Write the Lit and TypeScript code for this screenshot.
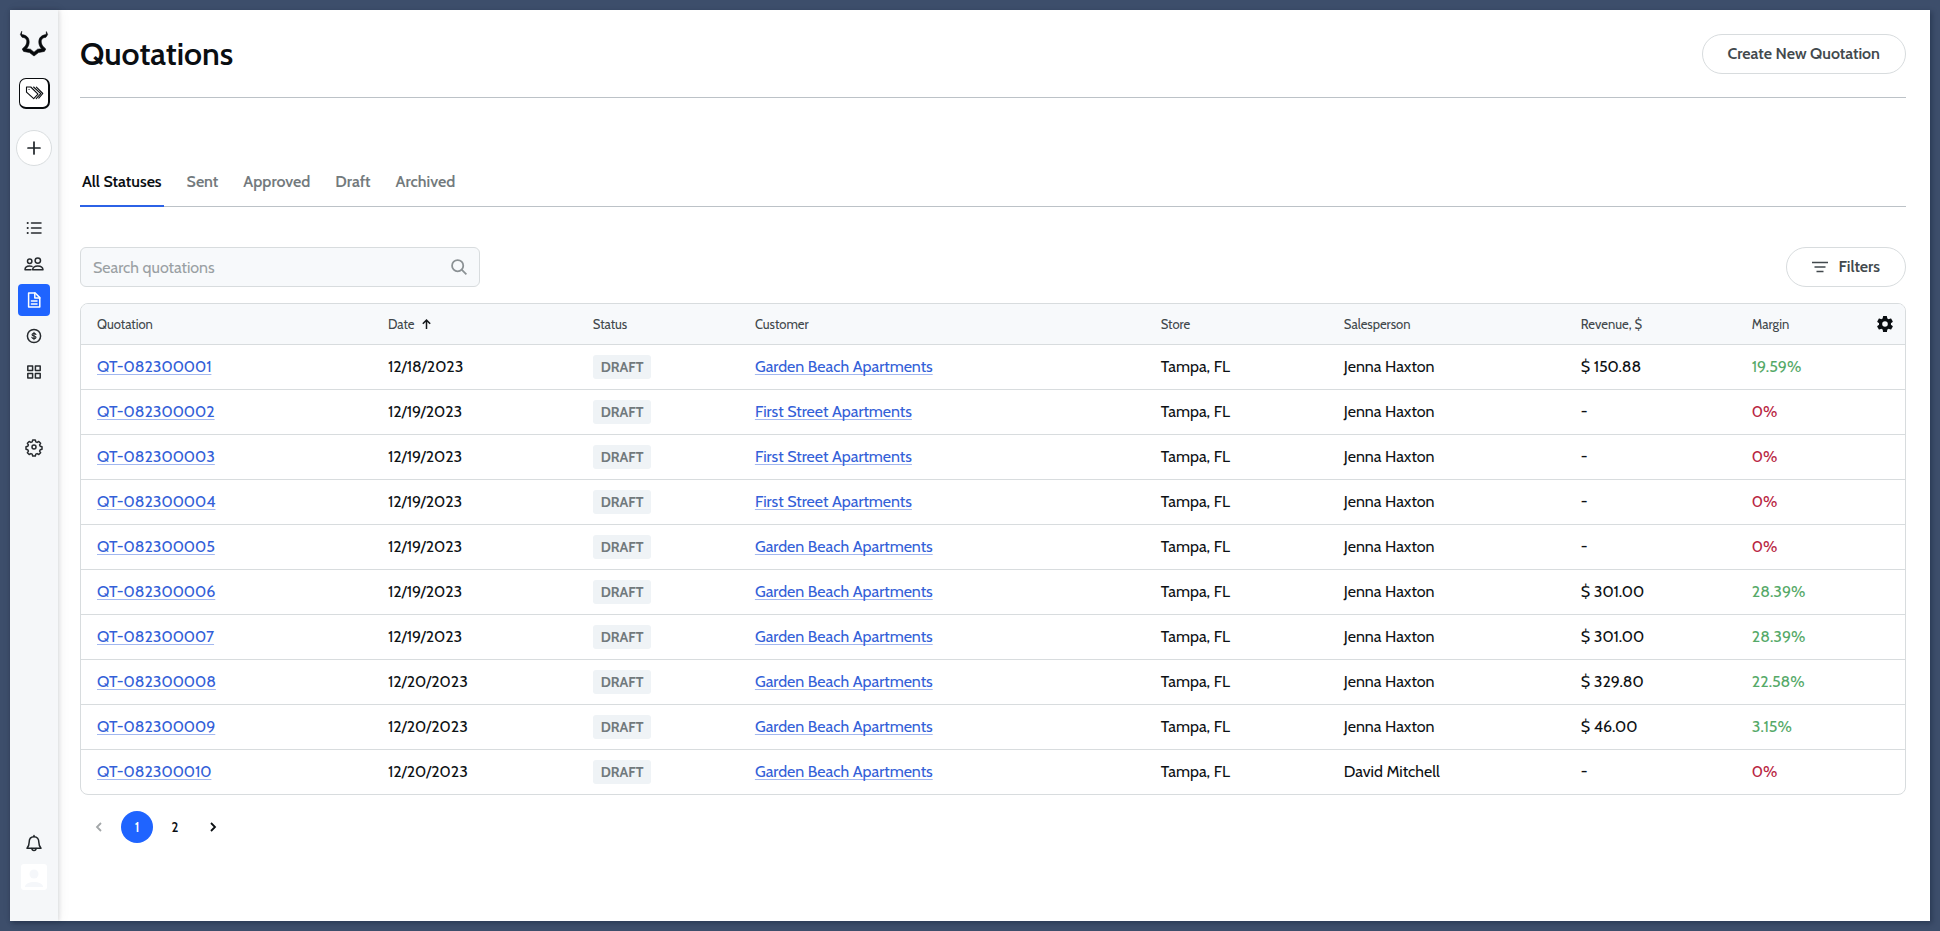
import { LitElement, html, css, svg } from "lit";
import { customElement, property, state } from "lit/decorators.js";
import { classMap } from "lit/directives/class-map.js";

interface Quotation {
  id: string;
  date: string;
  customer: string;
  person: string;
  revenue: string;
  margin: string;
}

const GARDEN = "Garden Beach Apartments";
const FIRST = "First Street Apartments";
const JENNA = "Jenna Haxton";

const QUOTATIONS: Quotation[] = [
  { id: "QT-082300001", date: "12/18/2023", customer: GARDEN, person: JENNA, revenue: "$ 150.88", margin: "19.59%" },
  { id: "QT-082300002", date: "12/19/2023", customer: FIRST, person: JENNA, revenue: "-", margin: "0%" },
  { id: "QT-082300003", date: "12/19/2023", customer: FIRST, person: JENNA, revenue: "-", margin: "0%" },
  { id: "QT-082300004", date: "12/19/2023", customer: FIRST, person: JENNA, revenue: "-", margin: "0%" },
  { id: "QT-082300005", date: "12/19/2023", customer: GARDEN, person: JENNA, revenue: "-", margin: "0%" },
  { id: "QT-082300006", date: "12/19/2023", customer: GARDEN, person: JENNA, revenue: "$ 301.00", margin: "28.39%" },
  { id: "QT-082300007", date: "12/19/2023", customer: GARDEN, person: JENNA, revenue: "$ 301.00", margin: "28.39%" },
  { id: "QT-082300008", date: "12/20/2023", customer: GARDEN, person: JENNA, revenue: "$ 329.80", margin: "22.58%" },
  { id: "QT-082300009", date: "12/20/2023", customer: GARDEN, person: JENNA, revenue: "$ 46.00", margin: "3.15%" },
  { id: "QT-082300010", date: "12/20/2023", customer: GARDEN, person: "David Mitchell", revenue: "-", margin: "0%" },
];

const TABS = ["All Statuses", "Sent", "Approved", "Draft", "Archived"];

const GEAR =
  "M19.4 13a7.5 7.5 0 0 0 0-2l2.1-1.65a.5.5 0 0 0 .12-.64l-2-3.46a.5.5 0 0 0-.61-.22l-2.49 1a7.3 7.3 0 0 0-1.69-.98l-.38-2.65A.49.49 0 0 0 14 2h-4a.49.49 0 0 0-.49.42l-.38 2.65c-.61.25-1.17.59-1.69.98l-2.49-1a.49.49 0 0 0-.61.22l-2 3.46a.5.5 0 0 0 .12.64L4.57 11a7.9 7.9 0 0 0 0 2l-2.11 1.65a.5.5 0 0 0-.12.64l2 3.46c.12.22.39.3.61.22l2.49-1c.52.4 1.08.73 1.69.98l.38 2.65c.03.24.24.4.49.4h4c.25 0 .46-.16.49-.4l.38-2.65a7.7 7.7 0 0 0 1.69-.98l2.49 1c.23.09.49 0 .61-.22l2-3.46a.5.5 0 0 0-.12-.64zM12 15.5a3.5 3.5 0 1 1 0-7 3.5 3.5 0 0 1 0 7z";

const ICONS = {
  list: svg`<path d="M6.500 4H16M6.500 9H16M6.500 14H16"/><path d="M2.600 4h.2M2.600 9h.2M2.600 14h.2" stroke-width="1.900"/>`,
  people: svg`<circle cx="4.700" cy="6.200" r="2.200"/><circle cx="12.800" cy="5.600" r="2.700"/><path d="M6 14.800H0c0-2.300 1.700-3.900 4.500-3.900 1 0 1.800.2 2.500.5"/><path d="M7.600 14.800c.2-2.300 2.300-3.900 5.200-3.900s5 1.600 5.200 3.900z"/>`,
  document: svg`<path d="M3.600 2h6.600l4.600 4.600V16H3.600z"/><path d="M9.800 2v5h5M6.400 10h5.600M6.400 13h5.600"/>`,
  dollar: svg`<circle cx="9" cy="9" r="6.600"/><path d="M10.900 7.500c-.2-.7-.9-1.100-1.900-1.100s-1.900.5-1.900 1.300c0 1.800 3.900.8 3.900 2.600 0 .8-.9 1.300-2 1.300s-1.900-.5-2.100-1.200M9 5.400v7.200" stroke-width="1.200"/>`,
  grid: svg`<path d="M2.800 3h4.800v4.600H2.800zM10.400 3h4.800v4.600h-4.800zM2.800 10.400h4.800V15H2.800zM10.400 10.400h4.800V15h-4.800z"/>`,
  settings: svg`<circle cx="9" cy="9" r="2"/><path d="M7.700 2h2.600l.5 1.900 1.300.5 1.700-.9 1.800 1.800-1 1.600.6 1.400 1.800.4v2.600l-1.800.4-.6 1.400 1 1.600-1.800 1.800-1.700-.9-1.300.5-.5 1.900H7.700l-.5-1.900-1.300-.5-1.700.9-1.800-1.800 1-1.600-.6-1.400L1 11.300V8.700l1.800-.4.6-1.400-1-1.600 1.800-1.800 1.700.9 1.300-.5z"/>`,
  bell: svg`<path d="M2 14.200h14c-1.600-1.800-2.200-3.400-2.200-6.200 0-3-1.600-5.300-4.800-5.300S4.200 5 4.200 8c0 2.800-.6 4.400-2.200 6.200z"/><path d="M9 1.600v1M6.900 14.500c.1 1.300 1 2 2.100 2s2-.7 2.100-2"/>`,
};

type IconName = keyof typeof ICONS;

const MAIN_NAV: { icon: IconName; label: string }[] = [
  { icon: "list", label: "Orders" },
  { icon: "people", label: "Customers" },
  { icon: "document", label: "Quotations" },
  { icon: "dollar", label: "Payments" },
  { icon: "grid", label: "Products" },
];

@customElement("side-bar")
export class SideBar extends LitElement {
  @property() active = "Quotations";

  static styles = css`
    :host {
      box-sizing: border-box;
      display: flex;
      flex-direction: column;
      align-items: center;
      flex: none;
      width: 48px;
      padding: 20px 0 31px;
      background: #f5f7f9;
      box-shadow: 1px 0 4px rgba(20, 30, 40, 0.14), 2px 0 12px rgba(20, 30, 40, 0.05);
    }
    svg {
      display: block;
      overflow: visible;
      fill: none;
      stroke: currentColor;
      stroke-width: 1.5;
      stroke-linecap: round;
      stroke-linejoin: round;
    }
    button {
      box-sizing: border-box;
      display: grid;
      place-items: center;
      padding: 0;
      border: 0;
      background: none;
      color: #1f2428;
      cursor: pointer;
    }
    .logo {
      width: 28px;
      height: 28px;
      color: #06090c;
    }
    .tags {
      width: 31px;
      height: 31px;
      margin-top: 20px;
      border: solid #080b0e;
      border-width: 1px 2px 2px 1px;
      border-radius: 7px;
      background: #fff;
      color: #080b0e;
    }
    .tags svg {
      stroke-width: 1.1;
    }
    .add {
      width: 36px;
      height: 36px;
      margin-top: 21px;
      border: 1px solid #d9dddf;
      border-radius: 50%;
      background: #fff;
    }
    nav {
      display: flex;
      flex-direction: column;
      gap: 4px;
      margin-top: 46px;
    }
    .item {
      display: grid;
      place-items: center;
      width: 32px;
      height: 32px;
      border-radius: 4px;
      color: #272b2f;
    }
    .current {
      background: #1f64ff;
      color: #fff;
    }
    .gap {
      margin-top: 39px;
    }
    .bell {
      width: 32px;
      height: 32px;
      margin-top: auto;
    }
    .avatar {
      display: grid;
      place-items: end center;
      width: 26px;
      height: 26px;
      margin-top: 5px;
      border-radius: 3px;
      background: #fff;
      color: #f5f7fa;
    }
    .avatar svg {
      fill: currentColor;
      stroke: none;
    }
  `;

  private icon(name: IconName) {
    return html`<svg width="18" height="18" viewBox="0 0 18 18" aria-hidden="true">${ICONS[name]}</svg>`;
  }

  render() {
    return html`
      <a class="logo" href="#" aria-label="Home">
        <svg width="28" height="28" viewBox="0 -1 28 28" aria-hidden="true">
          <path fill="currentColor" stroke="currentColor" stroke-width=".6" d="M1.600.6L.4 3.600 2 6.200C5.500 6.600 7 8.500 6.800 11c-.2 3-2.300 5-4.600 7l1.400 2.400 5.900 1.200L14 25l4.500-3.400 5.900-1.200 1.400-2.400c-2.300-2-4.400-4-4.600-7-.2-2.500 1.300-4.400 4.800-4.800l1.600-2.600L26.400.6l-.2 3C21.500 4 18.800 6.800 18.800 11c0 3 1.200 5 2.800 6.800l-4 .4L14 21.200l-3.600-3-4-.4C8 16 9.200 14 9.200 11c0-4.200-2.700-7-7.400-7.400z"/>
        </svg>
      </a>
      <button class="tags" aria-label="Workspace">
        <svg width="20" height="18" viewBox="0 0 20 18" aria-hidden="true">
          <path d="M2.500 3h4.300l7.200 7.200-4.300 4.500-7.200-6.500z"/><path d="M5 5.500h.1M9.600 3l7.200 6.700-4.600 5M12.400 3.200l6.400 6.300-4 4.700"/>
        </svg>
      </button>
      <button class="add" aria-label="Create">
        <svg width="14" height="14" viewBox="0 0 14 14" aria-hidden="true"><path stroke-width="1.700" d="M7 1v12M1 7h12"/></svg>
      </button>
      <nav aria-label="Main">
        ${MAIN_NAV.map(
          (n) => html`<a
            href="#"
            class=${classMap({ item: true, current: n.label === this.active })}
            aria-label=${n.label}
            >${this.icon(n.icon)}</a
          >`
        )}
        <a class="item gap" href="#" aria-label="Settings">${this.icon("settings")}</a>
      </nav>
      <button class="bell" aria-label="Notifications">${this.icon("bell")}</button>
      <a class="avatar" href="#" aria-label="Account">
        <svg width="20" height="22" viewBox="0 0 20 22" aria-hidden="true">
          <circle cx="10" cy="6" r="4.500"/><path d="M1 19c0-3.500 4.500-5 9-5s9 1.500 9 5z"/>
        </svg>
      </a>
    `;
  }
}

@customElement("quotation-table")
export class QuotationTable extends LitElement {
  @property({ attribute: false }) rows: Quotation[] = [];

  static styles = css`
    :host {
      display: block;
      border: 1px solid #d8dcde;
      border-radius: 8px;
      overflow: hidden;
    }
    table {
      width: 100%;
      table-layout: fixed;
      border-collapse: collapse;
    }
    .c-id { width: 15.95%; }
    .c-date { width: 11.23%; }
    .c-status { width: 8.89%; }
    .c-customer { width: 22.25%; }
    .c-store { width: 10.04%; }
    .c-person { width: 12.99%; }
    .c-revenue { width: 9.38%; }
    .c-margin { width: 7.07%; }
    .c-tools { width: 2.2%; }
    th {
      height: 40px;
      padding: 0 16px;
      background: #f7f9fb;
      color: #42484c;
      font-size: 13px;
      line-height: 20px;
      font-weight: 400;
      text-align: left;
    }
    td {
      height: 44px;
      padding: 0 16px;
      border-top: 1px solid #d8dcde;
      color: #0d1114;
      font-size: 16px;
      line-height: 24px;
      white-space: nowrap;
    }
    td a {
      color: #3360d8;
      text-decoration: underline 1px #a3b8f0;
      text-underline-offset: 2px;
      text-decoration-skip-ink: none;
    }
    .sort {
      display: inline-flex;
      align-items: center;
      gap: 8px;
      padding: 0;
      border: 0;
      background: none;
      color: inherit;
      font: inherit;
    }
    .tools {
      padding: 0;
    }
    .gear {
      display: grid;
      place-items: center;
      margin: 0 auto;
      padding: 0;
      border: 0;
      background: none;
      color: #0a0e12;
    }
    .badge {
      display: inline-block;
      padding: 0 8px;
      border-radius: 3px;
      background: #eff3f6;
      color: #71797c;
      font-size: 14px;
      line-height: 24px;
      font-weight: 700;
    }
    .up { color: #55a968; }
    .zero { color: #b92643; }
  `;

  render() {
    return html`
      <table>
        <colgroup>
          <col class="c-id" /><col class="c-date" /><col class="c-status" /><col class="c-customer" />
          <col class="c-store" /><col class="c-person" /><col class="c-revenue" /><col class="c-margin" />
          <col class="c-tools" />
        </colgroup>
        <thead>
          <tr>
            <th scope="col">Quotation</th>
            <th scope="col" aria-sort="ascending">
              <button class="sort">
                Date
                <svg width="9" height="10" viewBox="0 0 9 10" fill="none" stroke="#14181b" stroke-width="1.500" aria-hidden="true">
                  <path d="M4.500 10V1.200M.8 4.800l3.700-3.700 3.700 3.700"/>
                </svg>
              </button>
            </th>
            <th scope="col">Status</th>
            <th scope="col">Customer</th>
            <th scope="col">Store</th>
            <th scope="col">Salesperson</th>
            <th scope="col">Revenue, $</th>
            <th scope="col">Margin</th>
            <th scope="col" class="tools">
              <button class="gear" aria-label="Configure columns">
                <svg width="16" height="16" viewBox="2 2 20 20" fill="currentColor" aria-hidden="true"><path d=${GEAR}/></svg>
              </button>
            </th>
          </tr>
        </thead>
        <tbody>
          ${this.rows.map(
            (r) => html`<tr>
              <td><a href="#">${r.id}</a></td>
              <td>${r.date}</td>
              <td><span class="badge">DRAFT</span></td>
              <td><a href="#">${r.customer}</a></td>
              <td>Tampa, FL</td>
              <td>${r.person}</td>
              <td>${r.revenue}</td>
              <td class=${r.margin === "0%" ? "zero" : "up"}>${r.margin}</td>
              <td></td>
            </tr>`
          )}
        </tbody>
      </table>
    `;
  }
}

@customElement("app-root")
export class AppRoot extends LitElement {
  @state() private tab = TABS[0];
  @state() private page = 1;

  static styles = css`
    :host {
      box-sizing: border-box;
      display: flex;
      min-height: 100vh;
      padding: 10px;
      background: #3d4e6b;
      color: #0a0e12;
      font-family: Cabin, Lato, sans-serif;
      font-size: 16px;
      line-height: 24px;
    }
    .window {
      display: flex;
      flex: 1;
      min-width: 0;
      background: #fff;
      box-shadow: 2px 2px 5px rgba(10, 20, 40, 0.35);
    }
    main {
      flex: 1;
      min-width: 0;
      padding: 0 24px 24px 22px;
    }
    button {
      font: inherit;
      cursor: pointer;
    }
    header {
      display: flex;
      align-items: center;
      justify-content: space-between;
      height: 87px;
      border-bottom: 1px solid #bcc2c7;
    }
    h1 {
      margin: 0;
      font-size: 32px;
      line-height: 40px;
      font-weight: 600;
    }
    .pill {
      box-sizing: border-box;
      display: flex;
      align-items: center;
      gap: 10px;
      height: 40px;
      padding: 0 25px;
      border: 1px solid #d8dcde;
      border-radius: 20px;
      background: #fff;
      color: #42494d;
      font-weight: 600;
    }
    .tabs {
      display: flex;
      gap: 21px;
      margin-top: 64px;
      border-bottom: 1px solid #bcc2c7;
    }
    .tab {
      margin-bottom: -1px;
      padding: 8px 2px 11px;
      border: 0;
      border-bottom: 2px solid transparent;
      background: none;
      color: #737a7d;
      font-weight: 600;
    }
    .selected {
      border-color: #2c62e6;
      color: #0a0e12;
    }
    .tools {
      display: flex;
      justify-content: space-between;
      margin: 40px 0 16px;
    }
    .search {
      box-sizing: border-box;
      display: flex;
      align-items: center;
      width: 400px;
      height: 40px;
      padding: 0 12px;
      border: 1px solid #d8dcde;
      border-radius: 6px;
      background: #f7f9fb;
      color: #8b9194;
    }
    input {
      flex: 1;
      min-width: 0;
      padding: 2px 0 0;
      border: 0;
      outline: 0;
      background: none;
      color: #0a0e12;
      font: inherit;
    }
    input::placeholder {
      color: #9aa0a3;
      opacity: 1;
    }
    .pages {
      display: flex;
      gap: 6px;
      margin: 16px 0 0 3px;
    }
    .page {
      display: grid;
      place-items: center;
      width: 32px;
      height: 32px;
      padding: 0;
      border: 0;
      border-radius: 50%;
      background: none;
      color: #0a0e12;
      font-size: 13px;
      font-weight: 600;
    }
    .on {
      background: #1f64ff;
      color: #fff;
    }
    .page:disabled {
      color: #a3a7a9;
    }
  `;

  private chevron(d: string) {
    return html`<svg width="8" height="10" viewBox="0 0 8 10" fill="none" stroke="currentColor" stroke-width="1.800" aria-hidden="true">
      <path d=${d} />
    </svg>`;
  }

  render() {
    return html`
      <div class="window">
        <side-bar></side-bar>
        <main>
          <header>
            <h1>Quotations</h1>
            <button class="pill">Create New Quotation</button>
          </header>
          <div class="tabs" role="tablist">
            ${TABS.map(
              (t) => html`<button
                role="tab"
                aria-selected=${t === this.tab}
                class=${classMap({ tab: true, selected: t === this.tab })}
                @click=${() => (this.tab = t)}
              >${t}</button>`
            )}
          </div>
          <div class="tools">
            <label class="search">
              <input type="text" placeholder="Search quotations" aria-label="Search quotations" />
              <svg width="16" height="16" viewBox="0 0 18 18" fill="none" stroke="currentColor" stroke-width="2" aria-hidden="true">
                <circle cx="7.500" cy="7.500" r="6.300"/><path d="M12 12l5.300 5.300"/>
              </svg>
            </label>
            <button class="pill">
              <svg width="16" height="12" viewBox="0 0 16 12" fill="none" stroke="currentColor" stroke-width="1.500" aria-hidden="true">
                <path d="M0 1.500h16M2.500 6h11M4.500 10.500h7"/>
              </svg>
              Filters
            </button>
          </div>
          <quotation-table .rows=${QUOTATIONS}></quotation-table>
          <nav class="pages" aria-label="Pagination">
            <button class="page" aria-label="Previous page" ?disabled=${this.page === 1} @click=${() => (this.page = 1)}>
              ${this.chevron("M6 1L2 5l4 4")}
            </button>
            ${[1, 2].map(
              (n) => html`<button class=${classMap({ page: true, on: n === this.page })} @click=${() => (this.page = n)}>${n}</button>`
            )}
            <button class="page" aria-label="Next page" ?disabled=${this.page === 2} @click=${() => (this.page = 2)}>
              ${this.chevron("M2 1l4 4-4 4")}
            </button>
          </nav>
        </main>
      </div>
    `;
  }
}
